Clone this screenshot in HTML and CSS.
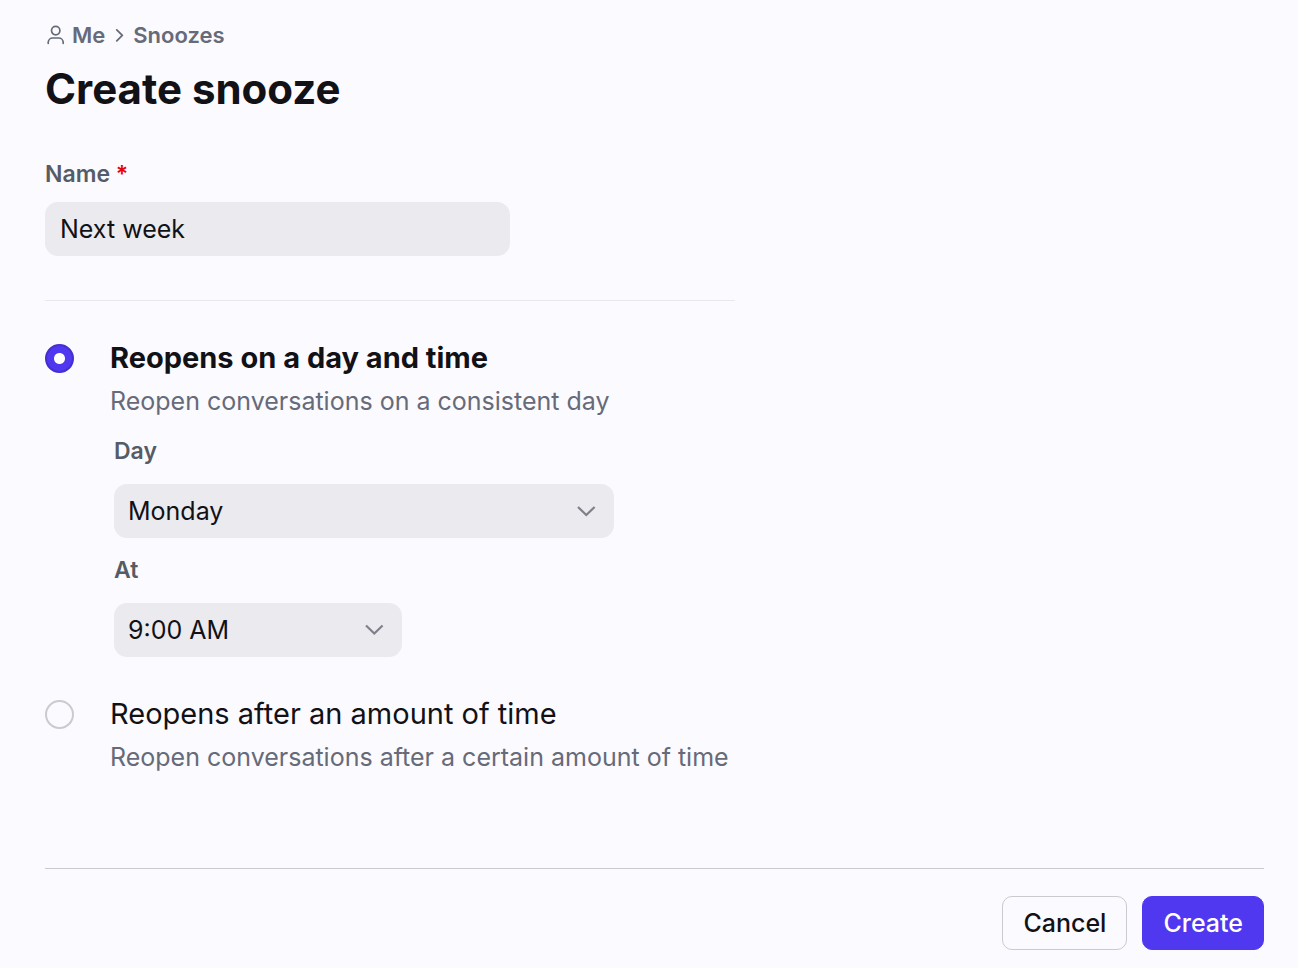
FILE: index.html
```html
<!DOCTYPE html>
<html lang="en">
<head>
    <meta charset="UTF-8">
    <meta name="viewport" content="width=device-width, initial-scale=1.0">
    <title>Create snooze</title>
    <link rel="stylesheet" href="styles.css">
</head>
<body>
    <nav class="breadcrumb" aria-label="Breadcrumb">
        <a href="#me">
            <svg width="20" height="20" viewBox="0 0 20 20" fill="none" stroke="currentColor" stroke-width="1.7" stroke-linecap="round" stroke-linejoin="round">
                <circle cx="10.7" cy="5.6" r="4.2"/>
                <path d="M3.2 18.3v-1a4.5 4.5 0 0 1 4.5-4.3h6a4.5 4.5 0 0 1 4.5 4.3v1"/>
            </svg>
            Me
        </a>
        <svg width="10" height="14" viewBox="0 0 10 14" fill="none" stroke="currentColor" stroke-width="1.8" stroke-linecap="round" stroke-linejoin="round">
            <path d="M2.8 1.9 8.3 7.4 2.8 12.9"/>
        </svg>
        <a href="#snoozes">Snoozes</a>
    </nav>
    <h1>Create snooze</h1>

    <form id="snoozeForm">
        <div class="fields">
            <div class="name-field">
                <label for="snoozeName">Name <span class="required">*</span></label>
                <input type="text" id="snoozeName" value="Next week" required>
            </div>

            <div class="option">
                <input type="radio" name="snoozeType" id="typeDay" value="day" checked>
                <div class="option-body">
                    <label class="option-title" for="typeDay">Reopens on a day and time</label>
                    <p>Reopen conversations on a consistent day</p>
                    <div class="schedule">
                        <label for="day">Day</label>
                        <div class="select day">
                            <select id="day">
                                <option>Monday</option>
                                <option>Tuesday</option>
                                <option>Wednesday</option>
                                <option>Thursday</option>
                                <option>Friday</option>
                            </select>
                            <svg width="20" height="12" viewBox="0 0 20 12" fill="none" stroke="currentColor" stroke-width="2.2">
                                <path d="M2 2 10.3 10 18.6 2"/>
                            </svg>
                        </div>
                        <label for="time">At</label>
                        <div class="select time">
                            <select id="time">
                                <option>9:00 AM</option>
                                <option>10:00 AM</option>
                                <option>11:00 AM</option>
                            </select>
                            <svg width="20" height="12" viewBox="0 0 20 12" fill="none" stroke="currentColor" stroke-width="2.2">
                                <path d="M2 1.5 10.3 9.5 18.6 1.5"/>
                            </svg>
                        </div>
                    </div>
                </div>
            </div>

            <div class="option">
                <input type="radio" name="snoozeType" id="typeAmount" value="amount">
                <div class="option-body">
                    <label class="option-title" for="typeAmount">Reopens after an amount of time</label>
                    <p>Reopen conversations after a certain amount of time</p>
                </div>
            </div>
        </div>

        <div class="actions">
            <button type="button">Cancel</button>
            <button type="submit" class="primary">Create</button>
        </div>
    </form>
</body>
</html>
```
FILE: styles.css
```css
* {
    box-sizing: border-box;
}
body {
    margin: 0;
    padding: 20px 34px 18px 45px;
    background-color: #fbfaff;
    color: #111116;
    font-family: Inter, sans-serif;
    font-size: 25px;
    line-height: 30px;
}
svg {
    flex: none;
}
.breadcrumb {
    display: flex;
    align-items: center;
    gap: 9px;
    color: #666a79;
    font-size: 22px;
    font-weight: 600;
}
.breadcrumb a {
    display: flex;
    align-items: center;
    gap: 7px;
    color: inherit;
    text-decoration: none;
}
h1 {
    margin: 12px 0 43px;
    font-size: 42px;
    font-weight: 700;
    line-height: 54px;
}
label {
    display: block;
    color: #565c65;
    font-size: 23px;
    font-weight: 600;
}
.required {
    color: #e60012;
}
.fields {
    max-width: 690px;
}
.name-field {
    padding-bottom: 44px;
    border-bottom: 1px solid #e9e8ed;
}
input[type="text"], select {
    display: block;
    height: 54px;
    padding: 0 15px;
    border: none;
    border-radius: 13px;
    background-color: #ebeaee;
    color: #111116;
    font: inherit;
}
input[type="text"] {
    width: 465px;
    max-width: 100%;
    margin-top: 13px;
}
.option {
    display: flex;
    gap: 36px;
    margin-top: 42px;
}
input[type="radio"] {
    flex: none;
    width: 29px;
    height: 29px;
    margin: 1px 0 0;
    border: 2px solid #cbcad0;
    border-radius: 50%;
    appearance: none;
}
input[type="radio"]:checked {
    border-color: #452fcf;
    background: radial-gradient(circle, #fff 5px, #4f38f0 6px);
}
.option-title {
    color: #111116;
    font-size: 29px;
    font-weight: 400;
}
input:checked + .option-body .option-title {
    font-weight: 700;
}
p {
    margin: 13px 0 0;
    color: #666a79;
}
.schedule {
    display: flex;
    flex-direction: column;
    gap: 18px;
    margin: 21px 0 0 4px;
    line-height: 29px;
}
.select {
    display: flex;
    align-items: center;
    position: relative;
}
.select svg {
    position: absolute;
    right: 18px;
    color: #80808b;
    pointer-events: none;
}
select {
    width: 100%;
    padding: 0 14px;
    appearance: none;
}
.day {
    width: 500px;
}
.time {
    width: 288px;
}
.actions {
    display: flex;
    justify-content: flex-end;
    gap: 15px;
    margin-top: 96px;
    padding-top: 27px;
    border-top: 1px solid #cbcad1;
}
button {
    height: 54px;
    padding: 0 20px;
    border: 1px solid #cbcad1;
    border-radius: 10px;
    background-color: #fbfaff;
    color: #111116;
    font: inherit;
    font-weight: 500;
    cursor: pointer;
}
.primary {
    border-color: #4f38f0;
    background-color: #4f38f0;
    color: #fff;
}
```
